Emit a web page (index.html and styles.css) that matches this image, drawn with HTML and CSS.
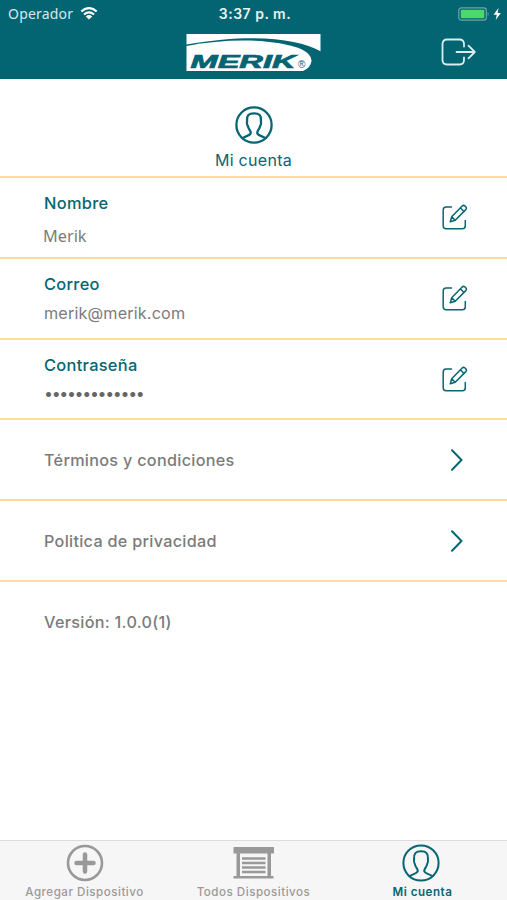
FILE: index.html
```html
<!DOCTYPE html>
<html lang="es">
<head>
    <meta charset="UTF-8">
    <meta name="viewport" content="width=device-width, initial-scale=1.0">
    <title>Mi cuenta</title>
    <link rel="stylesheet" href="styles.css">
</head>
<body>
    <!-- shared icons -->
    <svg class="sprite">
        <symbol id="user" viewBox="0 0 38 38">
            <circle cx="19" cy="19" r="17.6"/>
            <path d="M7.5 32.2C10.500 29.800 15.800 29.800 15.800 26.800C15.800 24.800 13.300 23 12.800 19.800C11.600 18.500 11.900 16.500 12.100 15C11.700 9.500 13.600 7.300 19 7.300S26.300 9.500 25.900 15C26.100 16.500 26.400 18.500 25.200 19.800C24.700 23 22.200 24.800 22.200 26.800C22.200 29.800 27.500 29.800 30.500 32.200"/>
        </symbol>
        <symbol id="edit" viewBox="0 0 26 26">
            <path d="M9.5 3H4.2Q1.2 3 1.2 6V21.800Q1.2 24.800 4.2 24.800H20.300Q23.300 24.800 23.300 21.800V16.500"/>
            <path d="M8.3 17.800L9.700 12.700L20.200 1.900Q21.600 .8 23 2L23.800 2.800Q25 4.200 23.800 5.600L13.200 16.300ZM9.700 12.700L13.200 16.300M18.400 3.800L21.900 7.400"/>
        </symbol>
        <symbol id="chevron" viewBox="0 0 12 22">
            <path d="M1 1.300L10.500 11L1 20.700"/>
        </symbol>
    </svg>

    <header class="header">
        <div class="status-bar">
            <div class="carrier">
                <span>Operador</span>
                <svg class="wifi" viewBox="0 0 18 13">
                    <path d="M1.3 4.5Q9 -2.3 16.7 4.5M4 7.5Q9 3.2 14 7.5"/>
                    <path class="wifi-dot" d="M5.8 9.4Q9 6.8 12.2 9.4L9 12.6Z"/>
                </svg>
            </div>
            <span class="clock">3:37 p. m.</span>
            <div class="power">
                <svg width="44" height="14" viewBox="0 0 44 14">
                    <rect class="battery" x=".8" y=".8" width="27.5" height="12.4" rx="2.6"/>
                    <rect class="charge" x="2.8" y="2.7" width="23.5" height="8.6" rx="1"/>
                    <path class="battery-tip" d="M29.7 4.7Q31.6 7 29.7 9.3Z"/>
                    <path class="bolt" d="M40.5 1L35.6 7.8H38.8L37.7 13L42.8 6H39.6Z"/>
                </svg>
            </div>
        </div>
        <div class="nav-bar">
            <svg class="logo" viewBox="0 0 135 38">
                <path d="M.5 0H134.5V17.2C112 4.5 66 -1 .5 10.5Z"/>
                <path d="M.5 12C42 4 88 4.5 115 15Q126 20.5 125.5 27Q124.5 34 117 37H.5Z"/>
                <text class="logo-name" x="4.5" y="34" textLength="105" lengthAdjust="spacingAndGlyphs">MERIK</text>
                <text class="logo-mark" x="112" y="34">®</text>
            </svg>
            <svg class="logout" viewBox="0 0 36 28">
                <path d="M23 8.5V6Q23 1.5 18.5 1.5H6Q1.5 1.5 1.5 6V22Q1.5 26.5 6 26.5H18.5Q23 26.5 23 22V19.5M15.5 14H33.8M27.5 7.7L33.8 14L27.5 20.3"/>
            </svg>
        </div>
    </header>

    <main class="account">
        <div class="title">
            <svg class="icon title-icon"><use href="#user"/></svg>
            <h1>Mi cuenta</h1>
        </div>
        <div class="row">
            <div class="field">
                <h2>Nombre</h2>
                <p class="name-value">Merik</p>
            </div>
            <svg class="icon edit"><use href="#edit"/></svg>
        </div>
        <div class="row">
            <div class="field">
                <h2>Correo</h2>
                <p class="email-value">merik@merik.com</p>
            </div>
            <svg class="icon edit"><use href="#edit"/></svg>
        </div>
        <div class="row">
            <div class="field">
                <h2>Contraseña</h2>
                <p class="password-value">•••••••••••••</p>
            </div>
            <svg class="icon edit"><use href="#edit"/></svg>
        </div>
        <div class="row link">
            <span>Términos y condiciones</span>
            <svg class="icon chevron"><use href="#chevron"/></svg>
        </div>
        <div class="row link">
            <span>Politica de privacidad</span>
            <svg class="icon chevron"><use href="#chevron"/></svg>
        </div>
        <div class="row link last">
            <span>Versión: 1.0.0(1)</span>
        </div>
    </main>

    <nav class="tabs">
        <div class="tab">
            <svg class="tab-icon" viewBox="0 0 38 38">
                <circle class="plus-ring" cx="19" cy="19" r="17"/>
                <path class="plus" d="M19 10.5V27.5M10.5 19H27.5"/>
            </svg>
            <span>Agregar Dispositivo</span>
        </div>
        <div class="tab">
            <svg class="tab-icon garage" viewBox="0 0 42 38">
                <path class="garage-fill" d="M.5 3.5Q.5 3 1 3H40.500Q41 3 41 3.500V9.500H38V32H40.500V34.500H.5V32H3.500V9.500H.5ZM7 9.500V32H34.500V9.500Z" fill-rule="evenodd"/>
                <path class="garage-door" d="M9 14.500H32.500M9 19H32.500M9 23.500H32.500M9 28H32.500"/>
            </svg>
            <span>Todos Dispositivos</span>
        </div>
        <div class="tab active">
            <svg class="icon tab-icon"><use href="#user"/></svg>
            <span>Mi cuenta</span>
        </div>
    </nav>
</body>
</html>
```
FILE: styles.css
```css
* {
    box-sizing: border-box;
}
body {
    margin: 0;
    height: 900px;
    display: flex;
    flex-direction: column;
    font-family: Inter, "Liberation Sans", sans-serif;
    background: #fff;
    color: #7b7b7b;
    overflow: hidden;
}
svg {
    display: block;
    flex: none;
}
h1, h2, p {
    margin: 0;
    white-space: nowrap;
}
.sprite {
    display: none;
}
.icon {
    fill: none;
    stroke: #066671;
    stroke-width: 2;
    stroke-linecap: round;
    stroke-linejoin: round;
}
.header {
    height: 79px;
    background: #046572;
    color: #fff;
}
.status-bar {
    height: 27px;
    display: grid;
    grid-template-columns: 1fr auto 1fr;
    align-items: center;
    padding: 0 5px 0 8px;
}
.carrier {
    display: flex;
    align-items: center;
    gap: 7px;
    font-family: "Noto Sans", sans-serif;
    font-size: 14px;
    letter-spacing: 0.2px;
    color: #d5e9eb;
}
.wifi {
    width: 18px;
    height: 13px;
    fill: none;
    stroke: #fff;
    stroke-width: 2.2;
}
.wifi-dot {
    fill: #fff;
    stroke: none;
}
.clock {
    font-size: 14px;
    font-weight: 600;
    letter-spacing: 0.5px;
    color: #e5f2f3;
}
.power {
    justify-self: end;
}
.battery {
    fill: none;
    stroke: #6fa5ac;
    stroke-width: 1.2;
}
.charge {
    fill: #4cd964;
}
.battery-tip {
    fill: #6fa5ac;
}
.bolt {
    fill: #fff;
}
.nav-bar {
    height: 52px;
    display: grid;
    grid-template-columns: 1fr auto 1fr;
    padding: 7px 30px 0;
}
.logo {
    grid-column: 2;
    width: 135px;
    height: 38px;
    fill: #fff;
}
.logo-name {
    font: italic bold 17.6px "Liberation Sans", sans-serif;
    fill: #046572;
    stroke: #046572;
    stroke-width: 0.7;
}
.logo-mark {
    font: 10px "Liberation Sans", sans-serif;
    fill: #046572;
}
.logout {
    justify-self: end;
    width: 36px;
    height: 28px;
    margin-top: 4px;
    fill: none;
    stroke: #d8edef;
    stroke-width: 1.8;
    stroke-linecap: round;
    stroke-linejoin: round;
}
.account {
    flex: 1;
}
.title {
    height: 99px;
    display: flex;
    flex-direction: column;
    align-items: center;
    padding-top: 27px;
    border-bottom: 2px solid #fbdb9b;
}
.title-icon {
    width: 38px;
    height: 38px;
    stroke-width: 2.3;
}
.title h1 {
    margin-top: 6px;
    font-size: 16px;
    line-height: 20px;
    font-weight: 400;
    letter-spacing: 0.3px;
    color: #066671;
}
.row {
    height: 80.8px;
    display: flex;
    justify-content: space-between;
    padding: 0 39px 0 44px;
    border-bottom: 2px solid #fbdb9b;
}
.field {
    padding-top: 15px;
}
.field h2 {
    font-size: 16.4px;
    line-height: 20px;
    font-weight: 500;
    color: #066671;
    letter-spacing: 0.3px;
}
.name-value {
    margin: 12px 0 0 -1px;
    font-family: "Noto Sans", sans-serif;
    font-size: 16.3px;
    line-height: 22px;
}
.email-value {
    margin-top: 9px;
    font-size: 16.2px;
    line-height: 20px;
    letter-spacing: 0.15px;
}
.password-value {
    margin-top: 8px;
    font-size: 16px;
    line-height: 20px;
    letter-spacing: -1.35px;
    color: #666;
}
.edit {
    width: 26px;
    height: 26px;
    margin-top: 26px;
    stroke-width: 1.5;
}
.link {
    align-items: center;
    padding-right: 44px;
    font-size: 16.2px;
    font-weight: 500;
    letter-spacing: 0.3px;
}
.chevron {
    width: 12px;
    height: 22px;
}
.last {
    border-bottom: none;
}
.tabs {
    height: 60px;
    display: grid;
    grid-template-columns: repeat(3, 1fr);
    border-top: 1px solid #dcdcdc;
    background: #f6f6f6;
    color: #9a9a9a;
}
.tab {
    display: flex;
    flex-direction: column;
    align-items: center;
    padding-top: 3px;
    font-size: 11.6px;
    line-height: 14px;
    font-weight: 500;
    letter-spacing: 0.5px;
    white-space: nowrap;
}
.tab-icon {
    width: 38px;
    height: 38px;
    margin-bottom: 3px;
}
.garage {
    width: 42px;
}
.plus-ring, .plus, .garage-door {
    fill: none;
    stroke: #999;
    stroke-width: 2.6;
}
.plus {
    stroke-width: 4.5;
    stroke-linecap: round;
}
.garage-door {
    stroke-width: 2.3;
}
.garage-fill {
    fill: #999;
}
.active {
    color: #066671;
    font-weight: 600;
}
.active .tab-icon {
    margin-right: 3px;
}
```
